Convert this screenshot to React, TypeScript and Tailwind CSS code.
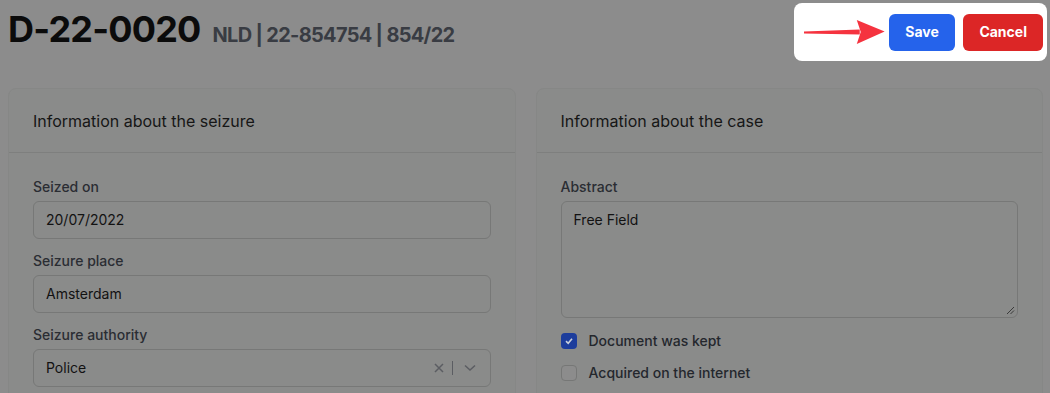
import React from "react";

function Label({ children }: { children: React.ReactNode }) {
  return <div className="mb-1 text-sm leading-5 font-medium text-[#2a2d33]">{children}</div>;
}

function Input({ value }: { value: string }) {
  return (
    <div className="h-[38px] rounded-md border border-[#777877] bg-[#8a8b8a] px-3 py-2 text-sm leading-5 text-[#121212]">
      {value}
    </div>
  );
}

function Card({ title, children }: { title: string; children: React.ReactNode }) {
  return (
    <div className="flex-1 rounded-lg border border-[#868786] bg-[#8a8b8a] overflow-hidden">
      <div className="border-b border-[#7e7f7e] px-6 pt-5 pb-[19px] text-base leading-6 text-[#161616]">{title}</div>
      <div className="px-6 pt-6 pb-6">{children}</div>
    </div>
  );
}

export default function App() {
  return (
    <div
      className="h-[393px] w-[1050px] overflow-hidden bg-[#8c8c8c]"
      style={{ fontFamily: "Inter, 'Liberation Sans', sans-serif" }}
    >
      <div className="flex items-start justify-between pl-2 pr-[3px] pt-[3px]">
        <div className="mt-[6px] flex items-baseline gap-3">
          <span className="text-4xl leading-10 font-bold text-[#0b0b0b] tracking-[-0.8px]">D-22-0020</span>
          <span className="text-xl font-bold text-[#393c43] tracking-[-0.7px]">NLD | 22-854754 | 854/22</span>
        </div>
        <div className="flex h-[58px] w-[253px] items-center rounded-lg bg-white pl-[10px] pr-[4px]">
          <svg width="82" height="26" viewBox="0 0 82 26" className="mr-[3px]">
            <polygon points="0,12.5 56,10.5 56,15.5 0,14.5" fill="#f5333f" />
            <polygon points="53,1 81,12.5 53,25 57,13" fill="#f5333f" />
          </svg>
          <button className="h-[37px] w-[67px] rounded-md bg-[#2563eb] text-sm font-bold text-white">Save</button>
          <button className="ml-2 h-[37px] w-[80px] rounded-md bg-[#dc2626] text-sm font-bold text-white">Cancel</button>
        </div>
      </div>

      <div className="mt-[27px] flex gap-5 pl-2 pr-[7px]">
        <Card title="Information about the seizure">
          <Label>Seized on</Label>
          <Input value="20/07/2022" />
          <div className="mt-3">
            <Label>Seizure place</Label>
            <Input value="Amsterdam" />
          </div>
          <div className="mt-3">
            <Label>Seizure authority</Label>
            <div className="flex h-[38px] items-center rounded-md border border-[#777877] bg-[#8a8b8a] pl-3 pr-[14px] text-sm leading-5 text-[#121212]">
              <span className="flex-1">Police</span>
              <svg width="10" height="10" viewBox="0 0 10 10" className="mr-[8px]">
                <path d="M1 1 L9 9 M9 1 L1 9" stroke="#5b5d62" strokeWidth="1.5" />
              </svg>
              <div className="h-[14px] w-px bg-[#5b5d62]" />
              <svg width="12" height="8" viewBox="0 0 12 8" className="ml-[11px]">
                <path d="M1 1.5 L6 6 L11 1.5" stroke="#5b5d62" strokeWidth="1.5" fill="none" />
              </svg>
            </div>
          </div>
        </Card>
        <Card title="Information about the case">
          <Label>Abstract</Label>
          <div className="relative h-[117px] rounded-md border border-[#777877] bg-[#8a8b8a] px-3 py-2 text-sm leading-5 text-[#121212]">
            Free Field
            <svg width="9" height="9" viewBox="0 0 9 9" className="absolute bottom-[2px] right-[2px]">
              <path d="M1 8 L8 1 M4.5 8 L8 4.5" stroke="#3a3a3a" strokeWidth="1" />
            </svg>
          </div>
          <div className="mt-[13px] flex flex-col gap-3">
            <div className="flex h-5 items-center gap-3">
              <div className="flex h-4 w-4 items-center justify-center rounded bg-[#1d3d9c]">
                <svg width="10" height="10" viewBox="0 0 10 10">
                  <path d="M2 5.2 L4.2 7.3 L8 2.8" stroke="#c9cfdc" strokeWidth="1.6" fill="none" />
                </svg>
              </div>
              <span className="text-sm font-medium text-[#24272d]">Document was kept</span>
            </div>
            <div className="flex h-5 items-center gap-3">
              <div className="h-4 w-4 rounded border border-[#767776] bg-[#8c8c8c]" />
              <span className="text-sm font-medium text-[#24272d]">Acquired on the internet</span>
            </div>
          </div>
        </Card>
      </div>
    </div>
  );
}
